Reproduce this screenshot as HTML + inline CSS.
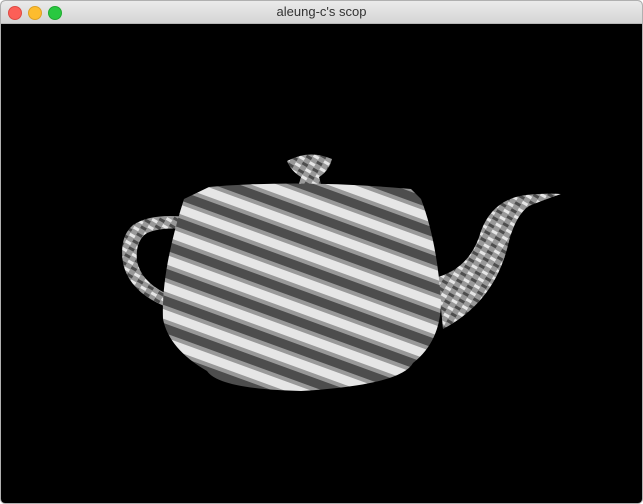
<!DOCTYPE html>
<html><head><meta charset="utf-8"><style>
html,body{margin:0;padding:0;width:643px;height:504px;background:#fff;overflow:hidden}
.win{position:absolute;left:0;top:0;width:641px;height:502px;border:1px solid #b0b0b0;border-radius:5px;overflow:hidden;background:#000}
.tb{position:absolute;left:0;top:0;width:641px;height:22px;background:linear-gradient(#ebebeb,#d5d5d5);border-bottom:1px solid #b8b8b8;text-align:center;font:13px "Liberation Sans",sans-serif;line-height:22px;color:#333}
.d{position:absolute;top:5px;width:12px;height:12px;border-radius:50%}
</style></head><body>
<div class="win">
<div class="tb">aleung-c's scop
<div class="d" style="left:7px;background:#fc5f57;border:0.5px solid #de4a42"></div>
<div class="d" style="left:27px;background:#fdbc2e;border:0.5px solid #dea123"></div>
<div class="d" style="left:47px;background:#29c840;border:0.5px solid #1fa930"></div>
</div>
<svg style="position:absolute;left:0;top:0" width="641" height="502" viewBox="0 0 641 502">
<defs>
<pattern id="p" width="60" height="26" patternUnits="userSpaceOnUse" patternTransform="rotate(20)">
<rect width="60" height="26" fill="#999"/>
<rect width="60" height="9" fill="#e6e6e6"/>
<rect y="13" width="60" height="9" fill="#4d4d4d"/>
</pattern>
<pattern id="q" width="12" height="8" patternUnits="userSpaceOnUse" patternTransform="rotate(30)">
<rect width="12" height="8" fill="#999"/>
<rect width="6" height="3" fill="#e6e6e6"/>
<rect x="6" y="4" width="6" height="3" fill="#4d4d4d"/>
</pattern>
</defs>
<path d="M186,216 Q150,212 132,224 Q118,236 122,262 Q128,290 163,305 L164,292 Q140,280 136,260 Q134,240 146,232 Q160,226 184,228 Z" fill="url(#q)"/>
<path d="M437,276 Q470,266 480,230 Q492,198 525,194 Q545,192 560,193 Q540,200 528,205 Q515,214 508,240 Q495,300 442,328 Z" fill="url(#q)"/>
<path d="M286,160 Q308,148 331,158 Q328,170 318,176 L320,183 L298,183 L300,176 Q290,170 286,160 Z" fill="url(#q)"/>
<path d="M208,186 Q300,178 410,188 L420,198 Q436,240 440,300 Q440,340 412,362 Q400,384 300,390 Q218,388 206,370 Q168,348 162,318 Q160,270 183,198 Z" fill="url(#p)"/>
</svg>
</div>
</body></html>
